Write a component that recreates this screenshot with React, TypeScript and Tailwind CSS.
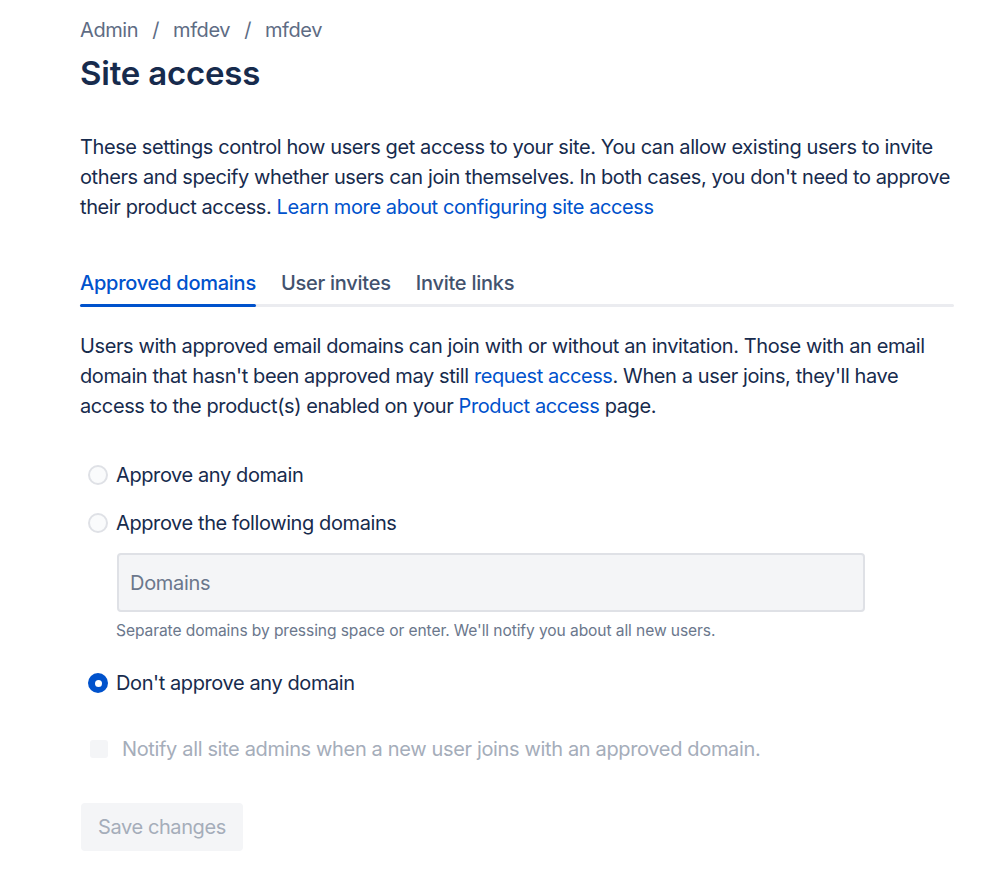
import { useState } from 'react';

type Choice = 'any' | 'following' | 'none';

function Radio({ checked, onClick, label }: { checked: boolean; onClick: () => void; label: string }) {
  return (
    <label className="flex items-center h-[30px] cursor-pointer" onClick={onClick}>
      <span className="w-[36px] flex justify-center">
        {checked ? (
          <span className="w-[20px] h-[20px] rounded-full bg-[#0052cc] flex items-center justify-center">
            <span className="w-[7px] h-[7px] rounded-full bg-white" />
          </span>
        ) : (
          <span className="w-[20px] h-[20px] rounded-full border-2 border-[#dfe1e6] bg-[#fafbfc]" />
        )}
      </span>
      <span className="text-[20px] tracking-[-0.4px] text-[#172b4d]">{label}</span>
    </label>
  );
}

export default function App() {
  const [choice, setChoice] = useState<Choice>('none');
  const [tab, setTab] = useState(0);
  const tabs = ['Approved domains', 'User invites', 'Invite links'];

  return (
    <div className="min-h-screen bg-white pl-[80px] pr-[45px] pt-[16px] text-[#172b4d]" style={{ fontFamily: 'Inter, "Noto Sans", sans-serif' }}>
      {/* Breadcrumbs */}
      <div className="flex items-center gap-[14px] text-[20px] tracking-[-0.4px] text-[#5e6c84] leading-[28px]">
        <span>Admin</span>
        <span>/</span>
        <span>mfdev</span>
        <span>/</span>
        <span>mfdev</span>
      </div>

      <h1 className="mt-[9px] text-[33px] font-semibold leading-[40px] tracking-[-0.2px]">Site access</h1>

      <p className="mt-[39px] text-[20px] leading-[30px] tracking-[-0.4px] max-w-[874px]">
        These settings control how users get access to your site. You can allow existing users to invite others and specify
        whether users can join themselves. In both cases, you don't need to approve their product access.{' '}
        <a className="text-[#0052cc]" href="#">Learn more about configuring site access</a>
      </p>

      {/* Tabs */}
      <div className="mt-[47px] w-[874px]">
        <div className="flex gap-[25px]">
          {tabs.map((t, i) => (
            <button
              key={t}
              onClick={() => setTab(i)}
              className={`relative pb-[9px] text-[20px] font-medium leading-[28px] tracking-[-0.25px] ${i === tab ? 'text-[#0052cc]' : 'text-[#42526e]'}`}
            >
              {t}
              {i === tab && <span className="absolute left-0 right-0 bottom-[-1px] h-[3px] rounded-full bg-[#0052cc] z-10" />}
            </button>
          ))}
        </div>
        <div className="h-[3px] bg-[#ebecf0] rounded-full -mt-[2px]" />
      </div>

      <p className="mt-[24px] text-[20px] leading-[30px] tracking-[-0.4px] max-w-[874px]">
        Users with approved email domains can join with or without an invitation. Those with an email domain that hasn't
        been approved may still <a className="text-[#0052cc]" href="#">request access</a>. When a user joins, they'll have
        access to the product(s) enabled on your <a className="text-[#0052cc]" href="#">Product access</a> page.
      </p>

      <div className="mt-[39px] flex flex-col">
        <Radio checked={choice === 'any'} onClick={() => setChoice('any')} label="Approve any domain" />
        <div className="mt-[18px]">
          <Radio checked={choice === 'following'} onClick={() => setChoice('following')} label="Approve the following domains" />
        </div>
        <div className="ml-[37px] mt-[15px] w-[748px]">
          <input
            disabled={choice !== 'following'}
            placeholder="Domains"
            className="w-full h-[59px] rounded-[4px] border-2 border-[#dfe1e6] bg-[#f4f5f7] px-[11px] text-[20px] tracking-[-0.3px] text-[#172b4d] placeholder:text-[#6b778c] outline-none"
          />
          <div className="mt-[9px] text-[15.6px] leading-[20px] tracking-[-0.1px] text-[#6b778c] -ml-[1px]">
            Separate domains by pressing space or enter. We'll notify you about all new users.
          </div>
        </div>
        <div className="mt-[27px]">
          <Radio checked={choice === 'none'} onClick={() => setChoice('none')} label="Don't approve any domain" />
        </div>
        <div className="mt-[36px] flex items-center h-[30px] pl-[10px]">
          <span className="w-[18px] h-[18px] rounded-[3px] bg-[#f4f5f7]" />
          <span className="ml-[14px] text-[20px] tracking-[-0.35px] text-[#a5adba]">
            Notify all site admins when a new user joins with an approved domain.
          </span>
        </div>
      </div>

      <button disabled className="mt-[39px] ml-[1px] h-[48px] px-[17px] rounded-[4px] bg-[#f4f5f7] text-[20px] tracking-[-0.4px] text-[#a5adba]">
        Save changes
      </button>
    </div>
  );
}
